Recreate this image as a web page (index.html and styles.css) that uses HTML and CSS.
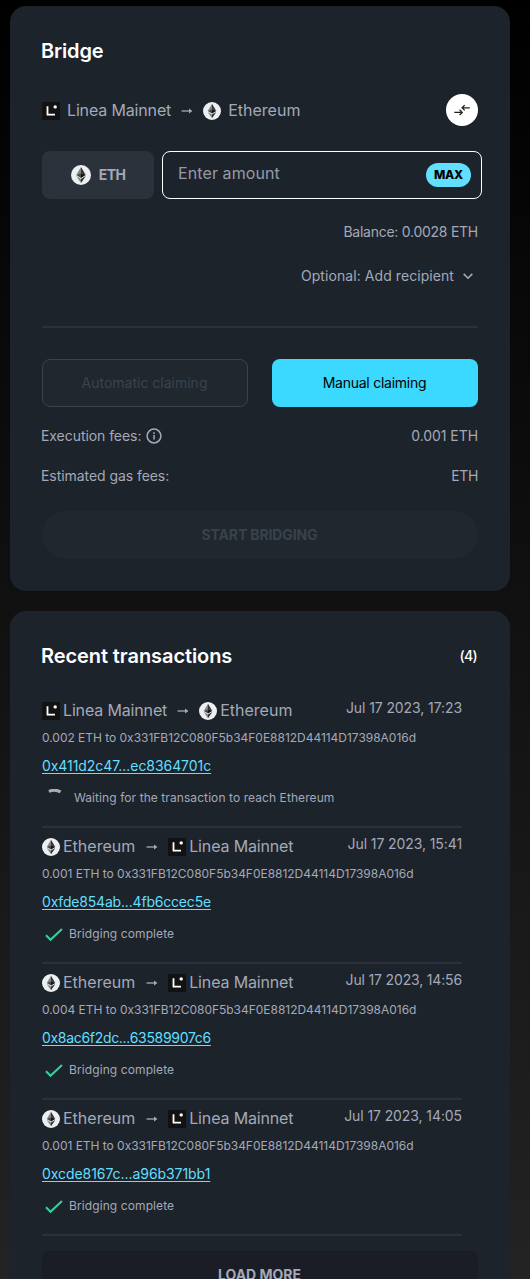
FILE: index.html
```
<!DOCTYPE html>
<html lang="en">
<head>
<meta charset="utf-8">
<title>Bridge</title>
<link rel="stylesheet" href="styles.css">
</head>
<body>
<svg class="sprite" aria-hidden="true">
  <symbol id="linea" viewBox="0 0 18 18">
    <rect width="18" height="18" fill="#121212"/>
    <path d="M5.5 4.3v8.4H13" fill="none" stroke="#fff" stroke-width="1.8"/>
    <circle cx="13.2" cy="4.9" r="1.7" fill="#fff"/>
  </symbol>
  <symbol id="eth" viewBox="0 0 18 18">
    <circle cx="9" cy="9" r="9" fill="#ecf0f0"/>
    <path d="M9 1.8 4.7 9 9 7.1z" fill="#828384"/>
    <path d="M9 1.8 13.3 9 9 7.1z" fill="#343434"/>
    <path d="M4.7 9 9 7.1v4.5z" fill="#4a4a4b"/>
    <path d="M13.3 9 9 7.1v4.5z" fill="#141414"/>
    <path d="M4.7 10 9 12.6v3.6z" fill="#828384"/>
    <path d="M13.3 10 9 12.6v3.6z" fill="#2f3030"/>
  </symbol>
  <symbol id="arrow" viewBox="0 0 12 8">
    <path d="M.5 4h9" fill="none" stroke="currentColor" stroke-width="1.3"/>
    <path d="M8 1.5 11.4 4 8 6.5z" fill="currentColor"/>
  </symbol>
  <symbol id="check" viewBox="0 0 18 14">
    <path d="m1 7.2 4.5 4.6L17 .9" fill="none" stroke="#31d29a" stroke-width="2.1"/>
  </symbol>
</svg>
<main class="page">
  <section class="card bridge">
    <h1 class="title bridge-title">Bridge</h1>
    <div class="direction">
      <div class="route route-wide">
        <svg class="coin"><use href="#linea"/></svg><span class="linea">Linea Mainnet</span>
        <svg class="arrow"><use href="#arrow"/></svg>
        <svg class="coin"><use href="#eth"/></svg><span>Ethereum</span>
      </div>
      <button class="swap" aria-label="Swap">
        <svg width="18" height="14" viewBox="0 0 18 14" fill="none" stroke="#222" stroke-width="1.3"><path d="M1.3 9.4h8M6.6 6.7l2.6 2.7-2.6 2.6M16.8 4.8h-7M11.7 2.1 9.1 4.8l2.6 2.6"/></svg>
      </button>
    </div>
    <div class="amount">
      <div class="token"><svg class="coin-lg"><use href="#eth"/></svg><span>ETH</span></div>
      <div class="field"><span class="placeholder">Enter amount</span><button class="max">MAX</button></div>
    </div>
    <div class="balance">Balance: 0.0028 ETH</div>
    <div class="recipient"><span>Optional: Add recipient</span>
      <svg width="10" height="7" viewBox="0 0 10 7" fill="none" stroke="currentColor" stroke-width="1.6"><path d="m.7.9 4.3 4.3L9.3.9"/></svg>
    </div>
    <hr class="rule">
    <div class="claim">
      <button class="claim-btn auto">Automatic claiming</button>
      <button class="claim-btn manual">Manual claiming</button>
    </div>
    <div class="fee">
      <span class="fee-name">Execution fees:
        <svg width="16" height="16" viewBox="0 0 16 16" fill="none" stroke="currentColor" stroke-width="1.5"><circle cx="8" cy="8" r="6.9"/><path d="M8 7v4.5M8 4.3v1.6"/></svg>
      </span>
      <span>0.001 ETH</span>
    </div>
    <div class="fee"><span>Estimated gas fees:</span><span class="gas-unit">ETH</span></div>
    <button class="start">START BRIDGING</button>
  </section>

  <section class="card history">
    <div class="history-head"><h2 class="title">Recent transactions</h2><span class="count">(4)</span></div>
    <ul class="list">
      <li class="tx">
        <div class="tx-head">
          <div class="route"><svg class="coin"><use href="#linea"/></svg><span class="linea">Linea Mainnet</span><svg class="arrow"><use href="#arrow"/></svg><svg class="coin"><use href="#eth"/></svg><span>Ethereum</span></div>
          <time class="date">Jul 17 2023, 17:23</time>
        </div>
        <div class="address">0.002 ETH to 0x331FB12C080F5b34F0E8812D44114D17398A016d</div>
        <a class="hash">0x411d2c47...ec8364701c</a>
        <div class="status waiting"><svg class="spinner" viewBox="0 0 14 18" fill="none" stroke="#a8adbb" stroke-width="3"><path d="M.9 2.5Q6.8-.4 12.6 2.9"/></svg><span>Waiting for the transaction to reach Ethereum</span></div>
      </li>
      <li class="tx">
        <div class="tx-head">
          <div class="route from-eth"><svg class="coin"><use href="#eth"/></svg><span>Ethereum</span><svg class="arrow"><use href="#arrow"/></svg><svg class="coin"><use href="#linea"/></svg><span class="linea">Linea Mainnet</span></div>
          <time class="date">Jul 17 2023, 15:41</time>
        </div>
        <div class="address">0.001 ETH to 0x331FB12C080F5b34F0E8812D44114D17398A016d</div>
        <a class="hash hash-tight">0xfde854ab...4fb6ccec5e</a>
        <div class="status"><svg class="check"><use href="#check"/></svg><span>Bridging complete</span></div>
      </li>
      <li class="tx">
        <div class="tx-head">
          <div class="route from-eth"><svg class="coin"><use href="#eth"/></svg><span>Ethereum</span><svg class="arrow"><use href="#arrow"/></svg><svg class="coin"><use href="#linea"/></svg><span class="linea">Linea Mainnet</span></div>
          <time class="date date-tight">Jul 17 2023, 14:56</time>
        </div>
        <div class="address">0.004 ETH to 0x331FB12C080F5b34F0E8812D44114D17398A016d</div>
        <a class="hash hash-tighter">0x8ac6f2dc...63589907c6</a>
        <div class="status"><svg class="check"><use href="#check"/></svg><span>Bridging complete</span></div>
      </li>
      <li class="tx">
        <div class="tx-head">
          <div class="route from-eth"><svg class="coin"><use href="#eth"/></svg><span>Ethereum</span><svg class="arrow"><use href="#arrow"/></svg><svg class="coin"><use href="#linea"/></svg><span class="linea">Linea Mainnet</span></div>
          <time class="date">Jul 17 2023, 14:05</time>
        </div>
        <div class="address">0.001 ETH to 0x331FB12C080F5b34F0E8812D44114D17398A016d</div>
        <a class="hash">0xcde8167c...a96b371bb1</a>
        <div class="status"><svg class="check"><use href="#check"/></svg><span>Bridging complete</span></div>
      </li>
    </ul>
    <button class="more">LOAD MORE</button>
  </section>
</main>
</body>
</html>
```
FILE: styles.css
```
* { box-sizing: border-box; }
body {
  margin: 0;
  background: #000;
  color: #a3a9b8;
  font: 400 14px/20px Inter, "Open Sans", sans-serif;
}
h1, h2, ul { margin: 0; padding: 0; list-style: none; }
button { border: 0; padding: 0; font: inherit; color: inherit; background: none; }
svg { display: block; flex: none; }
.sprite { position: absolute; width: 0; height: 0; }
.page {
  display: flex;
  flex-direction: column;
  gap: 20px;
  height: 100vh;
  overflow: hidden;
  padding: 6px 20px 0 10px;
  background: linear-gradient(#000, #232323);
}
.card { flex: none; border-radius: 16px; background: #1d232b; padding: 0 32px; }
.bridge { height: 585px; padding-top: 31px; }
.title { color: #fff; font-size: 20px; line-height: 28px; font-weight: 600; letter-spacing: -0.08px; margin-left: -1px; }
.bridge-title { letter-spacing: -0.15px; }

.direction { display: flex; justify-content: space-between; align-items: center; margin-top: 29px; height: 32px; }
.route { display: flex; align-items: center; font-size: 16px; line-height: 20px; }
.route span { padding-bottom: 1px; }
.coin { width: 18px; height: 18px; margin: 2px 3px 0 0; }
.route-wide .coin { margin-right: 7px; }
.linea { letter-spacing: -0.15px; }
.arrow { width: 12px; height: 8px; margin: 2px 10px 0 10px; }
.from-eth .arrow { margin-left: 11px; }
.swap { display: grid; place-items: center; width: 32px; height: 32px; border-radius: 50%; background: #fff; }

.amount { display: flex; gap: 8px; width: 440px; margin-top: 25px; height: 48px; }
.token { display: flex; justify-content: center; align-items: center; gap: 8px; width: 112px; border-radius: 8px; background: #2b323b; font-weight: 700; letter-spacing: -0.6px; }
.token span { padding-bottom: 1px; }
.coin-lg { width: 20px; height: 20px; }
.field { flex: 1; display: flex; justify-content: space-between; align-items: center; padding: 0 10px 0 15px; border: 1px solid #fff; border-radius: 8px; }
.placeholder { font-size: 16px; letter-spacing: 0.1px; padding-bottom: 4px; color: #949ba7; }
.max { width: 45px; height: 24px; padding-bottom: 1px; border-radius: 12px; background: #61dfff; color: #000; font-size: 12px; font-weight: 800; letter-spacing: -0.3px; }
.balance { margin-top: 23px; text-align: right; letter-spacing: -0.26px; }
.recipient { display: flex; justify-content: flex-end; align-items: center; gap: 9px; margin-top: 24px; padding-right: 5px; letter-spacing: 0.07px; }
.rule { margin: 40px 0 31px; border: 0; height: 2px; background: #2b303a; }
.claim { display: grid; grid-template-columns: 1fr 1fr; gap: 24px; }
.claim-btn { height: 48px; padding: 0 1px 1px 0; border-radius: 8px; }
.auto { border: 1px solid #3a424c; background: #20272f; color: #3b434e; }
.manual { background: #3bd9ff; color: #000; letter-spacing: -0.25px; }
.fee { display: flex; justify-content: space-between; margin: 20px 0 0 -1px; letter-spacing: -0.06px; }
.claim + .fee { margin-top: 19px; }
.fee-name { display: flex; align-items: center; gap: 5px; }
.gas-unit { letter-spacing: -0.4px; }
.start { display: block; width: 100%; height: 48px; margin-top: 25px; padding: 0 1px 1px 0; border-radius: 24px; background: #20272f; color: #39424c; font-weight: 700; letter-spacing: -0.12px; }

.history { height: 720px; padding-top: 31px; }
.history-head { display: flex; justify-content: space-between; align-items: center; height: 28px; }
.count { color: #fff; font-weight: 500; letter-spacing: -0.7px; padding-right: 1px; }
.list { width: 420px; margin-top: 22px; }
.tx { height: 136px; border-bottom: 2px solid #2b303a; padding-top: 8px; }
.tx-head { display: flex; justify-content: space-between; height: 20px; }
.date { letter-spacing: -0.09px; margin-top: -2px; }
.date-tight { letter-spacing: -0.16px; }
.address { margin-top: 8px; height: 20px; font-size: 12px; letter-spacing: -0.025px; white-space: nowrap; }
.hash { display: block; width: max-content; margin-top: 8px; color: #61dfff; letter-spacing: -0.06px; text-decoration: underline; text-decoration-skip-ink: none; text-underline-offset: 2px; }
.hash-tight { letter-spacing: -0.19px; }
.hash-tighter { letter-spacing: -0.31px; }
.status { display: flex; align-items: center; height: 20px; margin-top: 12px; padding-left: 3px; gap: 6px; font-size: 12px; letter-spacing: 0.1px; }
.check { width: 18px; height: 14px; margin-top: 2px; }
.waiting { padding-left: 6px; gap: 12px; letter-spacing: 0.08px; }
.spinner { width: 14px; height: 18px; }
.more { display: block; width: 436px; height: 48px; margin-top: 15px; padding: 0 1px 1px 0; border-radius: 8px; background: #1a1d25; font-weight: 700; }
```
